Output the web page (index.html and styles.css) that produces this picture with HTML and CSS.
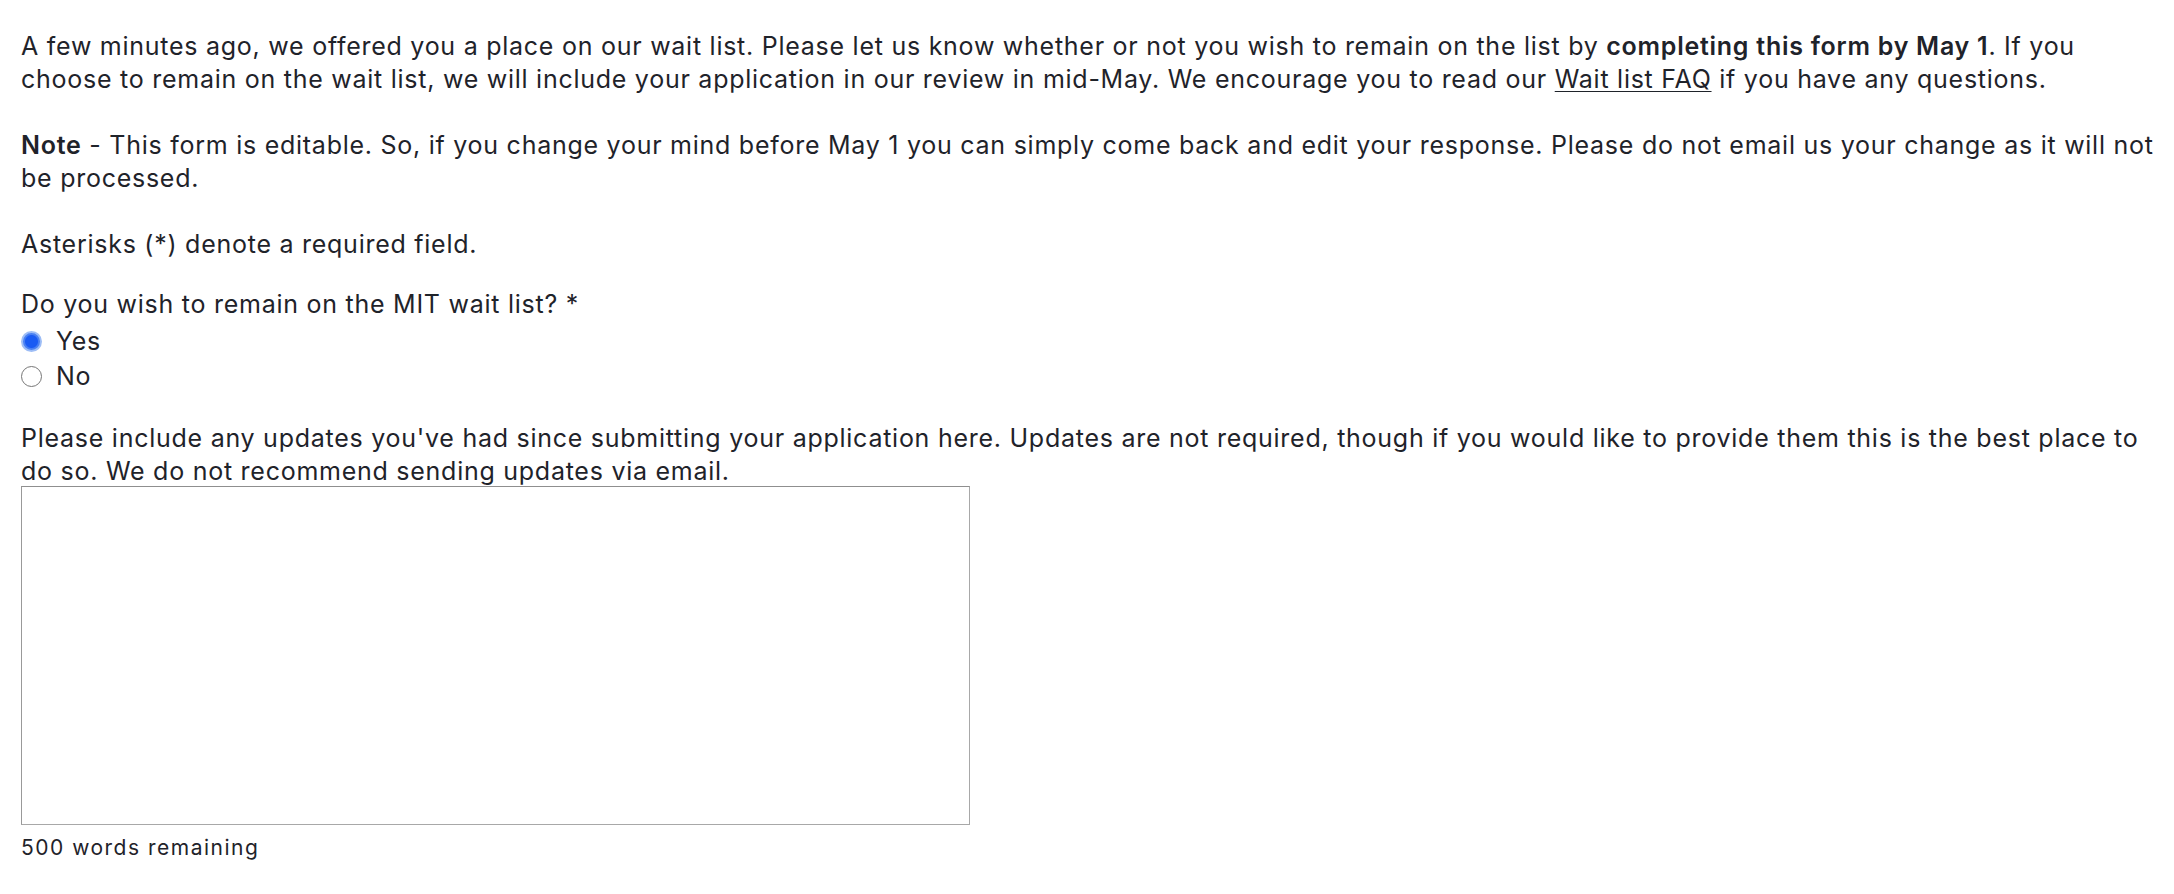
FILE: index.html
```html
<!DOCTYPE html>
<html lang="en">
<head>
<meta charset="utf-8">
<title>Wait list form</title>
<link rel="stylesheet" href="styles.css">
</head>
<body>
<main class="form">
  <p class="para">A few minutes ago, we offered you a place on our wait list. Please let us know whether or not you wish to remain on the list by <strong>completing this form by May 1</strong>. If you choose to remain on the wait list, we will include your application in our review in mid-May. We encourage you to read our <a class="link" href="#">Wait list FAQ</a> if you have any questions.</p>
  <p class="para"><strong>Note</strong> - This form is editable. So, if you change your mind before May 1 you can simply come back and edit your response. Please do not email us your change as it will not be processed.</p>
  <p class="para para-tight">Asterisks (*) denote a required field.</p>
  <fieldset class="question">
    <legend class="question-label">Do you wish to remain on the MIT wait list? *</legend>
    <label class="option"><input class="radio" type="radio" name="remain" checked> <span>Yes</span></label>
    <label class="option"><input class="radio" type="radio" name="remain"> <span>No</span></label>
  </fieldset>
  <div class="updates">
    <label class="updates-label" for="updates">Please include any updates you've had since submitting your application here. Updates are not required, though if you would like to provide them this is the best place to do so. We do not recommend sending updates via email.</label>
    <textarea id="updates" class="textarea"></textarea>
    <div class="counter">500 words remaining</div>
  </div>
</main>
</body>
</html>
```

FILE: styles.css
```css
html, body {
  margin: 0;
  padding: 0;
  background: #ffffff;
}

body {
  font-family: Inter, "Noto Sans", "Liberation Sans", sans-serif;
  font-size: 25px;
  letter-spacing: 0.74px;
  line-height: 33px;
  color: #1f232a;
}

.form {
  padding: 30px 6px 0 21px;
}

.para {
  margin: 0 0 33px 0;
}

.para-tight {
  margin-bottom: 27px;
}

.para strong {
  font-weight: 600;
}

.link {
  color: inherit;
  text-decoration: underline;
  text-underline-offset: 3px;
  text-decoration-thickness: 1px;
}

.question {
  border: 0;
  margin: 0 0 28px 0;
  padding: 0;
  min-width: 0;
}

.question-label {
  padding: 0;
  margin-bottom: 3px;
}

.option {
  display: flex;
  align-items: center;
  gap: 14px;
  height: 35px;
}

.radio {
  appearance: none;
  -webkit-appearance: none;
  margin: 0;
  width: 21px;
  height: 21px;
  border-radius: 50%;
  border: 1.5px solid #767676;
  background: #fff;
  flex: none;
  box-sizing: border-box;
}

.radio:checked {
  border: 2.5px solid #9dbdf6;
  background: radial-gradient(circle, #1a5bf3 0 6px, #4a80f2 7px);
}

.updates {
  display: flex;
  flex-direction: column;
  align-items: flex-start;
}

.updates-label {
  display: block;
}

.textarea {
  width: 949px;
  height: 339px;
  box-sizing: border-box;
  margin: -2px 0 0 0;
  border: 1px solid #a8a8a8;
  border-top-color: #8f8f8f;
  border-left-color: #999;
  resize: none;
  padding: 4px;
  font: inherit;
}

.counter {
  font-size: 21px;
  letter-spacing: 1.5px;
  line-height: 28px;
  margin-top: 9px;
}
```
